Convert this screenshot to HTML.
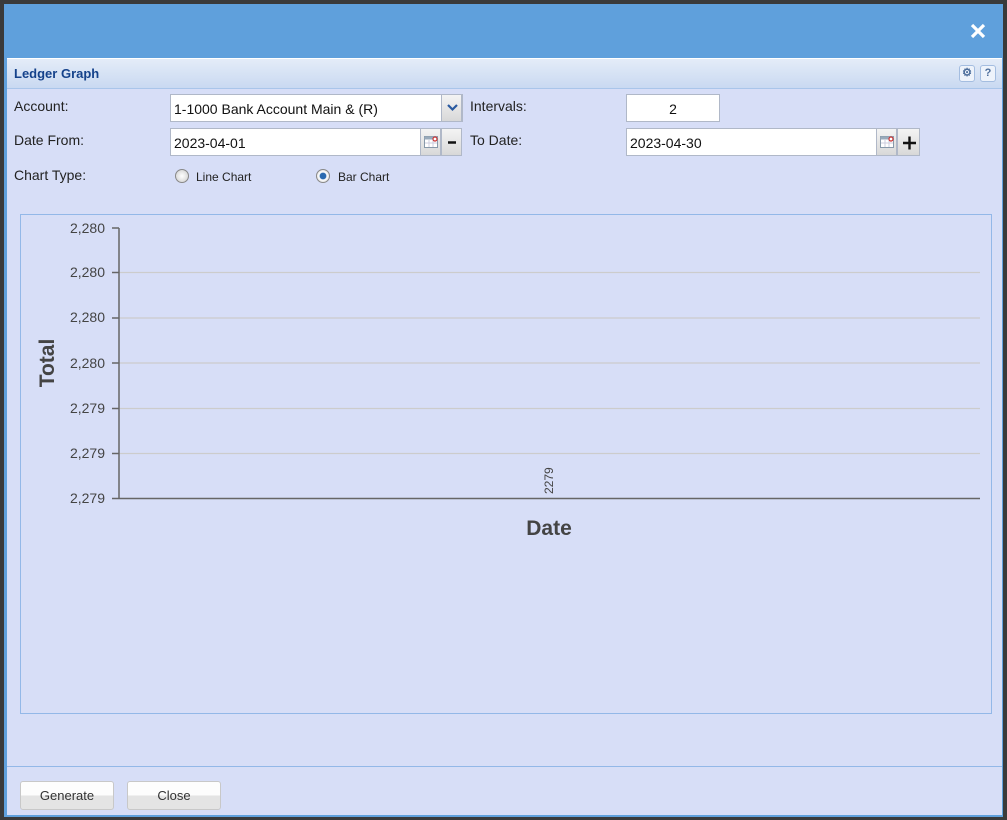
<!DOCTYPE html>
<html><head><style>
*{margin:0;padding:0;box-sizing:border-box}
body{width:1007px;height:820px;background:#3a3a3a;position:relative;overflow:hidden;font-family:"Liberation Sans",sans-serif;font-size:14px;color:#222}
#win{position:absolute;left:4px;top:4px;width:999px;height:813px;background:#5fa0dc}
#panel{position:absolute;left:7px;top:58px;width:995px;height:757px;background:#d7def7;border-top:1px solid #fff}
#hdr{height:30px;background:linear-gradient(#e4ecf8,#c9d9f1);border-bottom:1px solid #a9c5ea;position:relative}
#hdr b{position:absolute;left:7px;top:7px;font-size:13px;color:#15428b}
.ib{position:absolute;top:6px;width:16px;height:17px;border:1px solid #a4bde0;border-radius:3px;background:#eef3fb;font-size:11px;font-weight:bold;color:#4d6e9c;text-align:center;line-height:15px}
.lbl{position:absolute;font-size:14px}
.inp{position:absolute;height:28px;background:#fff;border:1px solid #b0b8c8;font-size:14px;padding:6px 3px;color:#111}
.btn2{position:absolute;width:21px;height:28px;background:linear-gradient(#f4f4f4,#d8d8d8);border:1px solid #b0b8c8;text-align:center}
.btn2 svg{position:absolute;left:0;top:0}
.radio{position:absolute;width:14px;height:14px;border-radius:50%;border:1px solid #888;background:radial-gradient(#fff,#ccc)}
.fb{position:absolute;top:781px;width:94px;height:29px;border:1px solid #c8c8c8;border-radius:3px;background:linear-gradient(#fdfdfd 50%,#e4e4e4 50%);font-size:13px;text-align:center;line-height:27px;color:#333}
</style></head><body>
<div id="win"><svg style="position:absolute;right:17px;top:19px" width="16" height="16"><path d="M2 2L14 14M14 2L2 14" stroke="#fff" stroke-width="3.2"/></svg></div>
<div id="panel">
<div id="hdr"><b>Ledger Graph</b><div class="ib" style="left:952px">⚙</div><div class="ib" style="left:973px">?</div></div>
</div>
<div class="lbl" style="left:14px;top:98px">Account:</div>
<div class="inp" style="left:170px;top:94px;width:293px;height:28px">1-1000 Bank Account Main &amp; (R)</div>
<div class="btn2" style="left:441px;top:94px"><svg width="21" height="26"><path d="M6 10L10.5 14.5L15 10" stroke="#2a5aa0" stroke-width="2.2" fill="none"/></svg></div>
<div class="lbl" style="left:470px;top:98px">Intervals:</div>
<div class="inp" style="left:626px;top:94px;width:94px;text-align:center">2</div>
<div class="lbl" style="left:14px;top:132px">Date From:</div>
<div class="inp" style="left:170px;top:128px;width:252px">2023-04-01</div>
<div class="btn2" style="left:420px;top:128px"><svg width="21" height="26"><rect x="3.5" y="7.5" width="13" height="11" fill="#fff" stroke="#8899aa"/><rect x="3.5" y="7.5" width="13" height="3" fill="#9ab"/><path d="M8 11v7M12 11v7M4 14h12" stroke="#ccd"/><circle cx="14" cy="10" r="2" fill="#fff" stroke="#c33" stroke-width="1.2"/></svg></div>
<div class="btn2" style="left:441px;top:128px"><svg width="21" height="26"><path d="M6 13.5h8" stroke="#111" stroke-width="2.5"/></svg></div>
<div class="lbl" style="left:470px;top:132px">To Date:</div>
<div class="inp" style="left:626px;top:128px;width:252px">2023-04-30</div>
<div class="btn2" style="left:876px;top:128px"><svg width="21" height="26"><rect x="3.5" y="7.5" width="13" height="11" fill="#fff" stroke="#8899aa"/><rect x="3.5" y="7.5" width="13" height="3" fill="#9ab"/><path d="M8 11v7M12 11v7M4 14h12" stroke="#ccd"/><circle cx="14" cy="10" r="2" fill="#fff" stroke="#c33" stroke-width="1.2"/></svg></div>
<div class="btn2" style="left:897px;top:128px;width:23px"><svg width="23" height="26"><path d="M5 14h13M11.5 7.5v13" stroke="#111" stroke-width="2.4"/></svg></div>
<div class="lbl" style="left:14px;top:167px">Chart Type:</div>
<div class="radio" style="left:175px;top:169px"></div>
<div class="lbl" style="left:196px;top:170px;font-size:12px">Line Chart</div>
<div class="radio" style="left:316px;top:169px;background:radial-gradient(#2a6ab0 35%,#fff 45%,#ccc)"></div>
<div class="lbl" style="left:338px;top:170px;font-size:12px">Bar Chart</div>
<svg style="position:absolute;left:20px;top:214px" width="972" height="500">
<rect x="0.5" y="0.5" width="971" height="499" fill="none" stroke="#93b8e8"/>
<g stroke="#cccccc" stroke-width="1.3"><line x1="99" x2="960" y1="58.5" y2="58.5"/><line x1="99" x2="960" y1="104" y2="104"/><line x1="99" x2="960" y1="149" y2="149"/><line x1="99" x2="960" y1="194.5" y2="194.5"/><line x1="99" x2="960" y1="239.5" y2="239.5"/></g>
<g stroke="#666" stroke-width="1.5"><line x1="99" x2="99" y1="14" y2="284"/><line x1="92" x2="960" y1="284.5" y2="284.5"/>
<line x1="92" x2="99" y1="14" y2="14"/><line x1="92" x2="99" y1="58.5" y2="58.5"/><line x1="92" x2="99" y1="104" y2="104"/><line x1="92" x2="99" y1="149" y2="149"/><line x1="92" x2="99" y1="194.5" y2="194.5"/><line x1="92" x2="99" y1="239.5" y2="239.5"/></g>
<g font-family="Liberation Sans" font-size="14" fill="#444" text-anchor="end"><text x="85" y="19">2,280</text><text x="85" y="63">2,280</text><text x="85" y="108">2,280</text><text x="85" y="154">2,280</text><text x="85" y="199">2,279</text><text x="85" y="244">2,279</text><text x="85" y="289">2,279</text></g>
<text transform="translate(34,149) rotate(-90)" text-anchor="middle" font-family="Liberation Sans" font-size="21" font-weight="bold" fill="#444">Total</text>
<text transform="translate(533,280) rotate(-90)" font-family="Liberation Sans" font-size="12" fill="#444">2279</text>
<text x="529" y="321" text-anchor="middle" font-family="Liberation Sans" font-size="21" font-weight="bold" fill="#444">Date</text>
</svg>
<div style="position:absolute;left:7px;top:766px;width:995px;height:1px;background:#93b8e8"></div>
<div class="fb" style="left:20px">Generate</div>
<div class="fb" style="left:127px">Close</div>
</body></html>
